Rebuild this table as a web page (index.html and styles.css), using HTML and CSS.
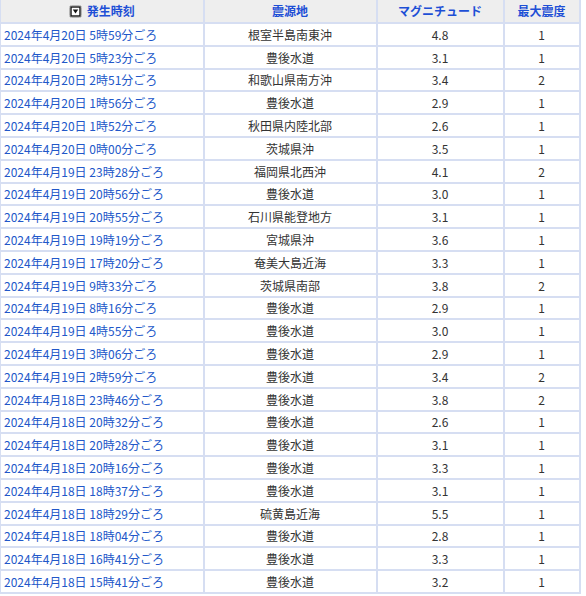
FILE: index.html
```html
<!DOCTYPE html>
<html lang="ja">
<head>
<meta charset="utf-8">
<link rel="stylesheet" href="styles.css">
</head>
<body>
<table class="eq">
<colgroup><col class="c1"><col class="c2"><col class="c3"><col class="c4"></colgroup>
<thead>
<tr>
<th><span class="sort"><svg width="13" height="13" viewBox="0 0 13 13"><rect x="0.5" y="0.5" width="12" height="12" rx="2" fill="#fff" stroke="#b5b5b5"/><rect x="2" y="2" width="9" height="9" fill="#fff" stroke="#111" stroke-width="1.4"/><path d="M3.8 4.6 H9.2 L6.5 8.6 Z" fill="#111"/></svg></span>発生時刻</th>
<th>震源地</th>
<th>マグニチュード</th>
<th>最大震度</th>
</tr>
</thead>
<tbody>
<tr><td><a href="#">2024年4月20日 5時59分ごろ</a></td><td>根室半島南東沖</td><td>4.8</td><td>1</td></tr>
<tr><td><a href="#">2024年4月20日 5時23分ごろ</a></td><td>豊後水道</td><td>3.1</td><td>1</td></tr>
<tr><td><a href="#">2024年4月20日 2時51分ごろ</a></td><td>和歌山県南方沖</td><td>3.4</td><td>2</td></tr>
<tr><td><a href="#">2024年4月20日 1時56分ごろ</a></td><td>豊後水道</td><td>2.9</td><td>1</td></tr>
<tr><td><a href="#">2024年4月20日 1時52分ごろ</a></td><td>秋田県内陸北部</td><td>2.6</td><td>1</td></tr>
<tr><td><a href="#">2024年4月20日 0時00分ごろ</a></td><td>茨城県沖</td><td>3.5</td><td>1</td></tr>
<tr><td><a href="#">2024年4月19日 23時28分ごろ</a></td><td>福岡県北西沖</td><td>4.1</td><td>2</td></tr>
<tr><td><a href="#">2024年4月19日 20時56分ごろ</a></td><td>豊後水道</td><td>3.0</td><td>1</td></tr>
<tr><td><a href="#">2024年4月19日 20時55分ごろ</a></td><td>石川県能登地方</td><td>3.1</td><td>1</td></tr>
<tr><td><a href="#">2024年4月19日 19時19分ごろ</a></td><td>宮城県沖</td><td>3.6</td><td>1</td></tr>
<tr><td><a href="#">2024年4月19日 17時20分ごろ</a></td><td>奄美大島近海</td><td>3.3</td><td>1</td></tr>
<tr><td><a href="#">2024年4月19日 9時33分ごろ</a></td><td>茨城県南部</td><td>3.8</td><td>2</td></tr>
<tr><td><a href="#">2024年4月19日 8時16分ごろ</a></td><td>豊後水道</td><td>2.9</td><td>1</td></tr>
<tr><td><a href="#">2024年4月19日 4時55分ごろ</a></td><td>豊後水道</td><td>3.0</td><td>1</td></tr>
<tr><td><a href="#">2024年4月19日 3時06分ごろ</a></td><td>豊後水道</td><td>2.9</td><td>1</td></tr>
<tr><td><a href="#">2024年4月19日 2時59分ごろ</a></td><td>豊後水道</td><td>3.4</td><td>2</td></tr>
<tr><td><a href="#">2024年4月18日 23時46分ごろ</a></td><td>豊後水道</td><td>3.8</td><td>2</td></tr>
<tr><td><a href="#">2024年4月18日 20時32分ごろ</a></td><td>豊後水道</td><td>2.6</td><td>1</td></tr>
<tr><td><a href="#">2024年4月18日 20時28分ごろ</a></td><td>豊後水道</td><td>3.1</td><td>1</td></tr>
<tr><td><a href="#">2024年4月18日 20時16分ごろ</a></td><td>豊後水道</td><td>3.3</td><td>1</td></tr>
<tr><td><a href="#">2024年4月18日 18時37分ごろ</a></td><td>豊後水道</td><td>3.1</td><td>1</td></tr>
<tr><td><a href="#">2024年4月18日 18時29分ごろ</a></td><td>硫黄島近海</td><td>5.5</td><td>1</td></tr>
<tr><td><a href="#">2024年4月18日 18時04分ごろ</a></td><td>豊後水道</td><td>2.8</td><td>1</td></tr>
<tr><td><a href="#">2024年4月18日 16時41分ごろ</a></td><td>豊後水道</td><td>3.3</td><td>1</td></tr>
<tr><td><a href="#">2024年4月18日 15時41分ごろ</a></td><td>豊後水道</td><td>3.2</td><td>1</td></tr>
</tbody>
</table>
</body>
</html>
```

FILE: styles.css
```css
html, body {
  margin: 0;
  padding: 0;
  background: #fff;
}
body {
  font-family: "Noto Sans CJK JP", "Noto Sans", sans-serif;
  font-size: 12px;
  color: #333;
}
.eq {
  border-collapse: collapse;
  table-layout: fixed;
  width: 579px;
}
.c1 { width: 203px; }
.c2 { width: 173px; }
.c3 { width: 127px; }
.c4 { width: 76px; }
.eq th, .eq td {
  border: 2px solid #d6def2;
  padding: 0 4px;
  line-height: 16px;
  white-space: nowrap;
  overflow: hidden;
}
.eq thead tr { height: 23px; }
.eq tbody tr { height: 22.8px; }
.eq th {
  background: #eeeeee;
  color: #1d4fd6;
  font-weight: bold;
  text-align: center;
  border-top: none;
}
.eq td {
  text-align: center;
  padding-top: 1px;
}
.eq td:first-child {
  text-align: left;
  padding-left: 3px;
}
.eq th:first-child, .eq td:first-child { border-left-width: 1px; }
.eq a {
  color: #2157c9;
  text-decoration: none;
}
.sort {
  display: inline-block;
  vertical-align: -2px;
  margin-right: 5px;
}
.sort svg { display: block; }
```
